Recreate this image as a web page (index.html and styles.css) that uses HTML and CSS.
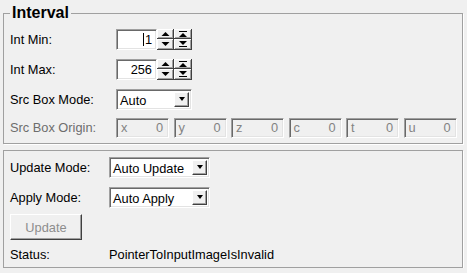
FILE: index.html
```html
<!DOCTYPE html>
<html lang="en">
<head>
    <meta charset="UTF-8">
    <title>Interval</title>
    <link rel="stylesheet" href="styles.css">
</head>
<body>
    <fieldset class="group">
        <legend class="group-title">Interval</legend>

        <div class="row">
            <span class="label">Int Min:</span>
            <div class="spin">
                <div class="spin-field"><span class="caret"></span>1</div>
                <svg class="spin-btns" width="35" height="21" viewBox="0 0 35 21" shape-rendering="crispEdges">
                    <rect x="0" y="0" width="17" height="10" fill="#404040"/>
                    <rect x="0" y="0" width="16" height="9" fill="#fff"/>
                    <rect x="1" y="1" width="15" height="8" fill="#a0a0a0"/>
                    <rect x="1" y="1" width="14" height="7" fill="#f0f0f0"/>
                    <rect x="0" y="10" width="17" height="11" fill="#404040"/>
                    <rect x="0" y="10" width="16" height="10" fill="#fff"/>
                    <rect x="1" y="11" width="15" height="9" fill="#a0a0a0"/>
                    <rect x="1" y="11" width="14" height="8" fill="#f0f0f0"/>
                    <polygon points="4.5,7 12.5,7 8.5,3" fill="#000" shape-rendering="auto"/>
                    <polygon points="4.5,13 12.5,13 8.5,17" fill="#000" shape-rendering="auto"/>

                    <rect x="17" y="0" width="18" height="10" fill="#404040"/>
                    <rect x="17" y="0" width="17" height="9" fill="#fff"/>
                    <rect x="18" y="1" width="16" height="8" fill="#a0a0a0"/>
                    <rect x="18" y="1" width="15" height="7" fill="#f0f0f0"/>
                    <rect x="17" y="10" width="18" height="11" fill="#404040"/>
                    <rect x="17" y="10" width="17" height="10" fill="#fff"/>
                    <rect x="18" y="11" width="16" height="9" fill="#a0a0a0"/>
                    <rect x="18" y="11" width="15" height="8" fill="#f0f0f0"/>
                    <rect x="22" y="2" width="8" height="1" fill="#000"/>
                    <polygon points="22,8 30,8 26,4" fill="#000" shape-rendering="auto"/>
                    <polygon points="22,12 30,12 26,16" fill="#000" shape-rendering="auto"/>
                    <rect x="22" y="17" width="8" height="1" fill="#000"/>
                </svg>
            </div>
        </div>

        <div class="row">
            <span class="label">Int Max:</span>
            <div class="spin">
                <div class="spin-field">256</div>
                <svg class="spin-btns" width="35" height="21" viewBox="0 0 35 21" shape-rendering="crispEdges">
                    <rect x="0" y="0" width="17" height="10" fill="#404040"/>
                    <rect x="0" y="0" width="16" height="9" fill="#fff"/>
                    <rect x="1" y="1" width="15" height="8" fill="#a0a0a0"/>
                    <rect x="1" y="1" width="14" height="7" fill="#f0f0f0"/>
                    <rect x="0" y="10" width="17" height="11" fill="#404040"/>
                    <rect x="0" y="10" width="16" height="10" fill="#fff"/>
                    <rect x="1" y="11" width="15" height="9" fill="#a0a0a0"/>
                    <rect x="1" y="11" width="14" height="8" fill="#f0f0f0"/>
                    <polygon points="4.5,7 12.5,7 8.5,3" fill="#000" shape-rendering="auto"/>
                    <polygon points="4.5,13 12.5,13 8.5,17" fill="#000" shape-rendering="auto"/>

                    <rect x="17" y="0" width="18" height="10" fill="#404040"/>
                    <rect x="17" y="0" width="17" height="9" fill="#fff"/>
                    <rect x="18" y="1" width="16" height="8" fill="#a0a0a0"/>
                    <rect x="18" y="1" width="15" height="7" fill="#f0f0f0"/>
                    <rect x="17" y="10" width="18" height="11" fill="#404040"/>
                    <rect x="17" y="10" width="17" height="10" fill="#fff"/>
                    <rect x="18" y="11" width="16" height="9" fill="#a0a0a0"/>
                    <rect x="18" y="11" width="15" height="8" fill="#f0f0f0"/>
                    <rect x="22" y="2" width="8" height="1" fill="#000"/>
                    <polygon points="22,8 30,8 26,4" fill="#000" shape-rendering="auto"/>
                    <polygon points="22,12 30,12 26,16" fill="#000" shape-rendering="auto"/>
                    <rect x="22" y="17" width="8" height="1" fill="#000"/>
                </svg>
            </div>
        </div>

        <div class="row">
            <span class="label">Src Box Mode:</span>
            <div class="combo combo-short">
                <span class="combo-text">Auto</span>
                <span class="combo-btn"><i class="arrow-down"></i></span>
            </div>
        </div>

        <div class="row row-last">
            <span class="label disabled">Src Box Origin:</span>
            <div class="coords">
                <div class="coord"><span>x</span><span>0</span></div>
                <div class="coord"><span>y</span><span>0</span></div>
                <div class="coord"><span>z</span><span>0</span></div>
                <div class="coord"><span>c</span><span>0</span></div>
                <div class="coord"><span>t</span><span>0</span></div>
                <div class="coord"><span>u</span><span>0</span></div>
            </div>
        </div>
    </fieldset>

    <div class="group group-plain">
        <div class="row">
            <span class="label label-narrow">Update Mode:</span>
            <div class="combo combo-wide">
                <span class="combo-text">Auto Update</span>
                <span class="combo-btn"><i class="arrow-down"></i></span>
            </div>
        </div>

        <div class="row">
            <span class="label label-narrow">Apply Mode:</span>
            <div class="combo combo-wide">
                <span class="combo-text">Auto Apply</span>
                <span class="combo-btn"><i class="arrow-down"></i></span>
            </div>
        </div>

        <div class="row row-button">
            <button class="push-btn" disabled>Update</button>
        </div>

        <div class="row row-status">
            <span class="label label-narrow">Status:</span>
            <span class="status">PointerToInputImageIsInvalid</span>
        </div>
    </div>
</body>
</html>
```

FILE: styles.css
```css
body {
    margin: 0;
    padding: 4px 4px 0 3px;
    background-color: #f0f0f0;
    font-family: "Liberation Sans", Arial, sans-serif;
    font-size: 12.8px;
    color: #000;
}

.group {
    margin: 0;
    border: 1px solid #a0a0a0;
    box-shadow: 1px 1px 0 #fff;
    padding: 2px 6px 2px 6px;
    min-width: 0;
}

.group-title {
    padding: 0 2px;
    font-size: 16px;
    font-weight: bold;
    line-height: 18px;
}

.group-plain {
    margin-top: 6px;
    padding: 1px 6px 0 6px;
}

.row {
    display: flex;
    align-items: center;
    height: 30px;
}

.row-last {
    height: 27px;
}

.row-button {
    align-items: flex-end;
    padding-bottom: 2px;
    box-sizing: border-box;
}

.row-status {
    height: 25px;
}

.label {
    width: 106px;
    flex: none;
}

.label-narrow {
    width: 99px;
}

.disabled {
    color: #6d6d6d;
}

/* sunken 3d edge used by text fields and combos */
.spin-field,
.combo,
.coord {
    box-sizing: border-box;
    border: 1px solid;
    border-color: #a0a0a0 #fff #fff #a0a0a0;
    box-shadow: inset 1px 1px 0 #696969, inset -1px -1px 0 #e3e3e3;
}

.spin {
    display: flex;
    height: 21px;
}

.spin-field {
    width: 41px;
    height: 21px;
    background-color: #fff;
    text-align: right;
    padding-right: 4px;
    line-height: 19px;
}

.caret {
    display: inline-block;
    width: 1px;
    height: 13px;
    background-color: #000;
    vertical-align: -2px;
    margin-right: 1px;
}

.spin-btns {
    display: block;
}

.combo {
    display: flex;
    height: 21px;
    background-color: #fff;
    padding: 2px;
}

.combo-short {
    width: 76px;
}

.combo-wide {
    width: 101px;
}

.combo-text {
    flex: 1;
    line-height: 17px;
    padding-left: 1px;
}

.combo-btn {
    width: 15px;
    box-sizing: border-box;
    background-color: #f0f0f0;
    border: 1px solid;
    border-color: #fff #404040 #404040 #fff;
    box-shadow: inset -1px -1px 0 #a0a0a0;
    display: flex;
    align-items: center;
    justify-content: center;
}

.arrow-down {
    width: 0;
    height: 0;
    border-left: 3.5px solid transparent;
    border-right: 3.5px solid transparent;
    border-top: 4px solid #000;
}

.coords {
    display: flex;
    gap: 4.5px;
}

.coord {
    width: 53px;
    height: 20px;
    display: flex;
    justify-content: space-between;
    align-items: center;
    padding: 0 5px 0 4px;
    color: #838383;
}

.push-btn {
    width: 72px;
    height: 26px;
    margin: 0;
    padding: 0;
    font: inherit;
    color: #8d8d8d;
    background-color: #f0f0f0;
    border: 1px solid;
    border-color: #fff #404040 #404040 #fff;
    box-shadow: inset -1px -1px 0 #a0a0a0;
}
```
